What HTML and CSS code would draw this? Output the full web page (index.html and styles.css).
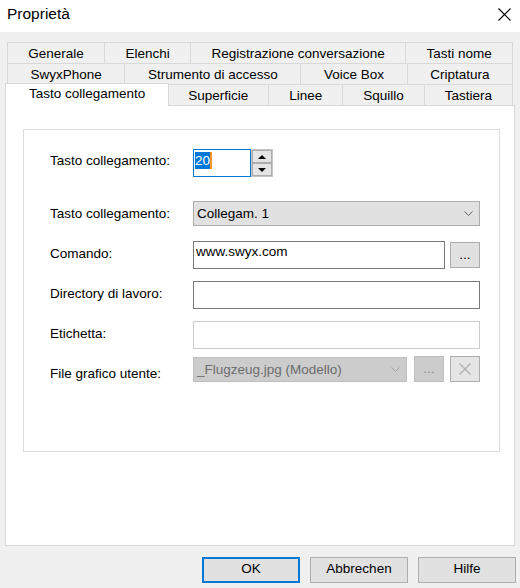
FILE: index.html
```html
<!DOCTYPE html>
<html lang="it">
<head>
<meta charset="utf-8">
<title>Proprietà</title>
<link rel="stylesheet" href="styles.css">
</head>
<body>
<div class="dialog">
  <div class="titlebar">
    <span class="title">Proprietà</span>
    <svg class="close" width="13" height="13" viewBox="0 0 13 13"><path d="M0.5 0.5 L12.5 12.5 M12.5 0.5 L0.5 12.5" stroke="#000" stroke-width="1.1" fill="none"/></svg>
  </div>

  <div class="tabstrip">
    <div class="tabrow">
      <div class="tab">Generale</div>
      <div class="tab">Elenchi</div>
      <div class="tab">Registrazione conversazione</div>
      <div class="tab">Tasti nome</div>
    </div>
    <div class="tabrow">
      <div class="tab">SwyxPhone</div>
      <div class="tab">Strumento di accesso</div>
      <div class="tab">Voice Box</div>
      <div class="tab">Criptatura</div>
    </div>
    <div class="tabrow">
      <div class="tab active">Tasto collegamento</div>
      <div class="tab">Superficie</div>
      <div class="tab">Linee</div>
      <div class="tab">Squillo</div>
      <div class="tab">Tastiera</div>
    </div>
  </div>

  <div class="panel">
    <div class="group">
      <div class="frow r1">
        <span class="lbl up2">Tasto collegamento:</span>
        <div class="spin">
          <div class="spin-edit"><span class="sel">20</span><span class="caret"></span></div>
          <div class="spin-btns">
            <div class="sbtn"><span class="arr-up"></span></div>
            <div class="sbtn"><span class="arr-down"></span></div>
          </div>
        </div>
      </div>

      <div class="frow r2">
        <span class="lbl">Tasto collegamento:</span>
        <div class="combo">
          <span>Collegam. 1</span>
          <svg class="chev" width="9" height="5" viewBox="0 0 9 5"><path d="M0.5 0.5 L4.5 4.5 L8.5 0.5" stroke="#606060" stroke-width="1" fill="none"/></svg>
        </div>
      </div>

      <div class="frow r3">
        <span class="lbl up1">Comando:</span>
        <div class="edit cmd">www.swyx.com</div>
        <div class="dots">...</div>
      </div>

      <div class="frow r4">
        <span class="lbl up1">Directory di lavoro:</span>
        <div class="edit full"></div>
      </div>

      <div class="frow r5">
        <span class="lbl up1">Etichetta:</span>
        <div class="edit full disabled"></div>
      </div>

      <div class="frow r6">
        <span class="lbl down5">File grafico utente:</span>
        <div class="combo dis">
          <span>_Flugzeug.jpg (Modello)</span>
          <svg class="chev" width="9" height="5" viewBox="0 0 9 5"><path d="M0.5 0.5 L4.5 4.5 L8.5 0.5" stroke="#a6a6a6" stroke-width="1" fill="none"/></svg>
        </div>
        <div class="dots dis">...</div>
        <div class="xbtn">
          <svg width="12" height="12" viewBox="0 0 12 12"><path d="M0.5 0.5 L11.5 11.5 M11.5 0.5 L0.5 11.5" stroke="#b0b0b0" stroke-width="1.4" fill="none"/></svg>
        </div>
      </div>
    </div>
  </div>

  <div class="buttons">
    <div class="btn default">OK</div>
    <div class="btn">Abbrechen</div>
    <div class="btn">Hilfe</div>
  </div>
</div>
</body>
</html>
```

FILE: styles.css
```css
html, body {
  margin: 0;
  padding: 0;
}

body {
  width: 520px;
  height: 588px;
  overflow: hidden;
  background: #f0f0f0;
  font-family: "Liberation Sans", Arial, sans-serif;
  font-size: 13.5px;
  color: #000;
}

.dialog {
  width: 520px;
  height: 588px;
}

/* title bar */
.titlebar {
  height: 32px;
  background: #fff;
  display: flex;
  justify-content: space-between;
  align-items: flex-start;
  padding: 0 9px 0 7px;
  box-sizing: border-box;
}

.title {
  font-size: 15.5px;
  line-height: 17px;
  padding-top: 5px;
}

.close {
  margin-top: 8px;
}

/* tabs */
.tabstrip {
  margin: 10px 7px 0 7px;
}

.tabrow {
  display: flex;
  height: 21px;
}

.tab {
  flex: 1 1 auto;
  box-sizing: border-box;
  border-top: 1px solid #d9d9d9;
  border-left: 1px solid #d9d9d9;
  text-align: center;
  white-space: nowrap;
  line-height: 19px;
  padding-top: 1px;
}

.tab:last-child {
  border-right: 1px solid #d9d9d9;
}

.tab.active {
  position: relative;
  z-index: 1;
  align-self: flex-start;
  height: 23px;
  margin: -1px -2px -1px -2px;
  background: #fff;
  border-right: 1px solid #d9d9d9;
  line-height: 17px;
  padding: 1px 3px 0 3px;
}

/* page */
.panel {
  margin: 0 5px;
  height: 441px;
  box-sizing: border-box;
  border: 1px solid #d9d9d9;
  background: #fff;
  padding: 23px 0 0 17px;
}

.group {
  width: 477px;
  height: 323px;
  box-sizing: border-box;
  border: 1px solid #dcdcdc;
  padding: 19px 0 0 26px;
}

.frow {
  display: flex;
  align-items: center;
  height: 28px;
}

.r2 { height: 25px; margin-top: 24px; }
.r3 { margin-top: 15px; }
.r4 { margin-top: 12px; }
.r5 { margin-top: 12px; }
.r6 { height: 26px; margin-top: 7px; align-items: flex-start; }

.lbl {
  flex: none;
  width: 143px;
  line-height: 16px;
  white-space: nowrap;
}

.lbl.up2 { padding-bottom: 4px; }
.lbl.up1 { padding-bottom: 2px; }
.lbl.down5 { margin-top: 10px; }

/* spin edit */
.spin {
  display: flex;
  height: 28px;
}

.spin-edit {
  width: 58px;
  height: 28px;
  box-sizing: border-box;
  border: 1px solid #0078d7;
  background: #fff;
  padding: 2px 0 0 1px;
  display: flex;
  align-items: flex-start;
}

.sel {
  background: #0078d7;
  color: #fff;
  line-height: 17px;
}

.caret {
  width: 2px;
  height: 17px;
  background: #f7931e;
}

.spin-btns {
  width: 22px;
  height: 28px;
  box-sizing: border-box;
  border: 1px solid #c3c3c3;
  display: flex;
  flex-direction: column;
}

.sbtn {
  flex: 1;
  box-sizing: border-box;
  border: 1px solid #adadad;
  background: #e5e5e5;
  display: flex;
  align-items: center;
  justify-content: center;
}

.arr-up {
  width: 0;
  height: 0;
  border-left: 4px solid transparent;
  border-right: 4px solid transparent;
  border-bottom: 4px solid #000;
}

.arr-down {
  width: 0;
  height: 0;
  border-left: 4px solid transparent;
  border-right: 4px solid transparent;
  border-top: 4px solid #000;
}

/* combo */
.combo {
  width: 287px;
  height: 25px;
  box-sizing: border-box;
  border: 1px solid #adadad;
  background: #e1e1e1;
  display: flex;
  align-items: center;
  justify-content: space-between;
  padding: 0 6px 0 3px;
  line-height: 16px;
  white-space: nowrap;
}

.combo.dis {
  width: 214px;
  margin-top: 1px;
  background: #cccccc;
  border-color: #bfbfbf;
  color: #6d6d6d;
}

/* edits */
.edit {
  height: 28px;
  box-sizing: border-box;
  border: 1px solid #7a7a7a;
  background: #fff;
  padding: 2px 0 0 2px;
  line-height: 16px;
  white-space: nowrap;
}

.edit.cmd { width: 252px; }
.edit.full { width: 287px; }
.edit.disabled { border-color: #cccccc; }

/* small buttons */
.dots {
  width: 30px;
  height: 26px;
  box-sizing: border-box;
  margin-left: 5px;
  border: 1px solid #adadad;
  background: #e1e1e1;
  display: flex;
  align-items: center;
  justify-content: center;
  line-height: 16px;
}

.dots.dis {
  margin-left: 7px;
  background: #cccccc;
  border-color: #bfbfbf;
  color: #8a8a8a;
}

.xbtn {
  width: 30px;
  height: 26px;
  box-sizing: border-box;
  margin-left: 6px;
  border: 1px solid #adadad;
  background: #e5e5e5;
  display: flex;
  align-items: center;
  justify-content: center;
}

/* bottom buttons */
.buttons {
  display: flex;
  justify-content: flex-end;
  gap: 10px;
  margin: 11px 4px 0 0;
}

.btn {
  width: 98px;
  height: 26px;
  box-sizing: border-box;
  border: 1px solid #adadad;
  background: #e1e1e1;
  display: flex;
  align-items: center;
  justify-content: center;
  line-height: 16px;
  padding-bottom: 2px;
}

.btn.default {
  border: 2px solid #0078d7;
}
```
